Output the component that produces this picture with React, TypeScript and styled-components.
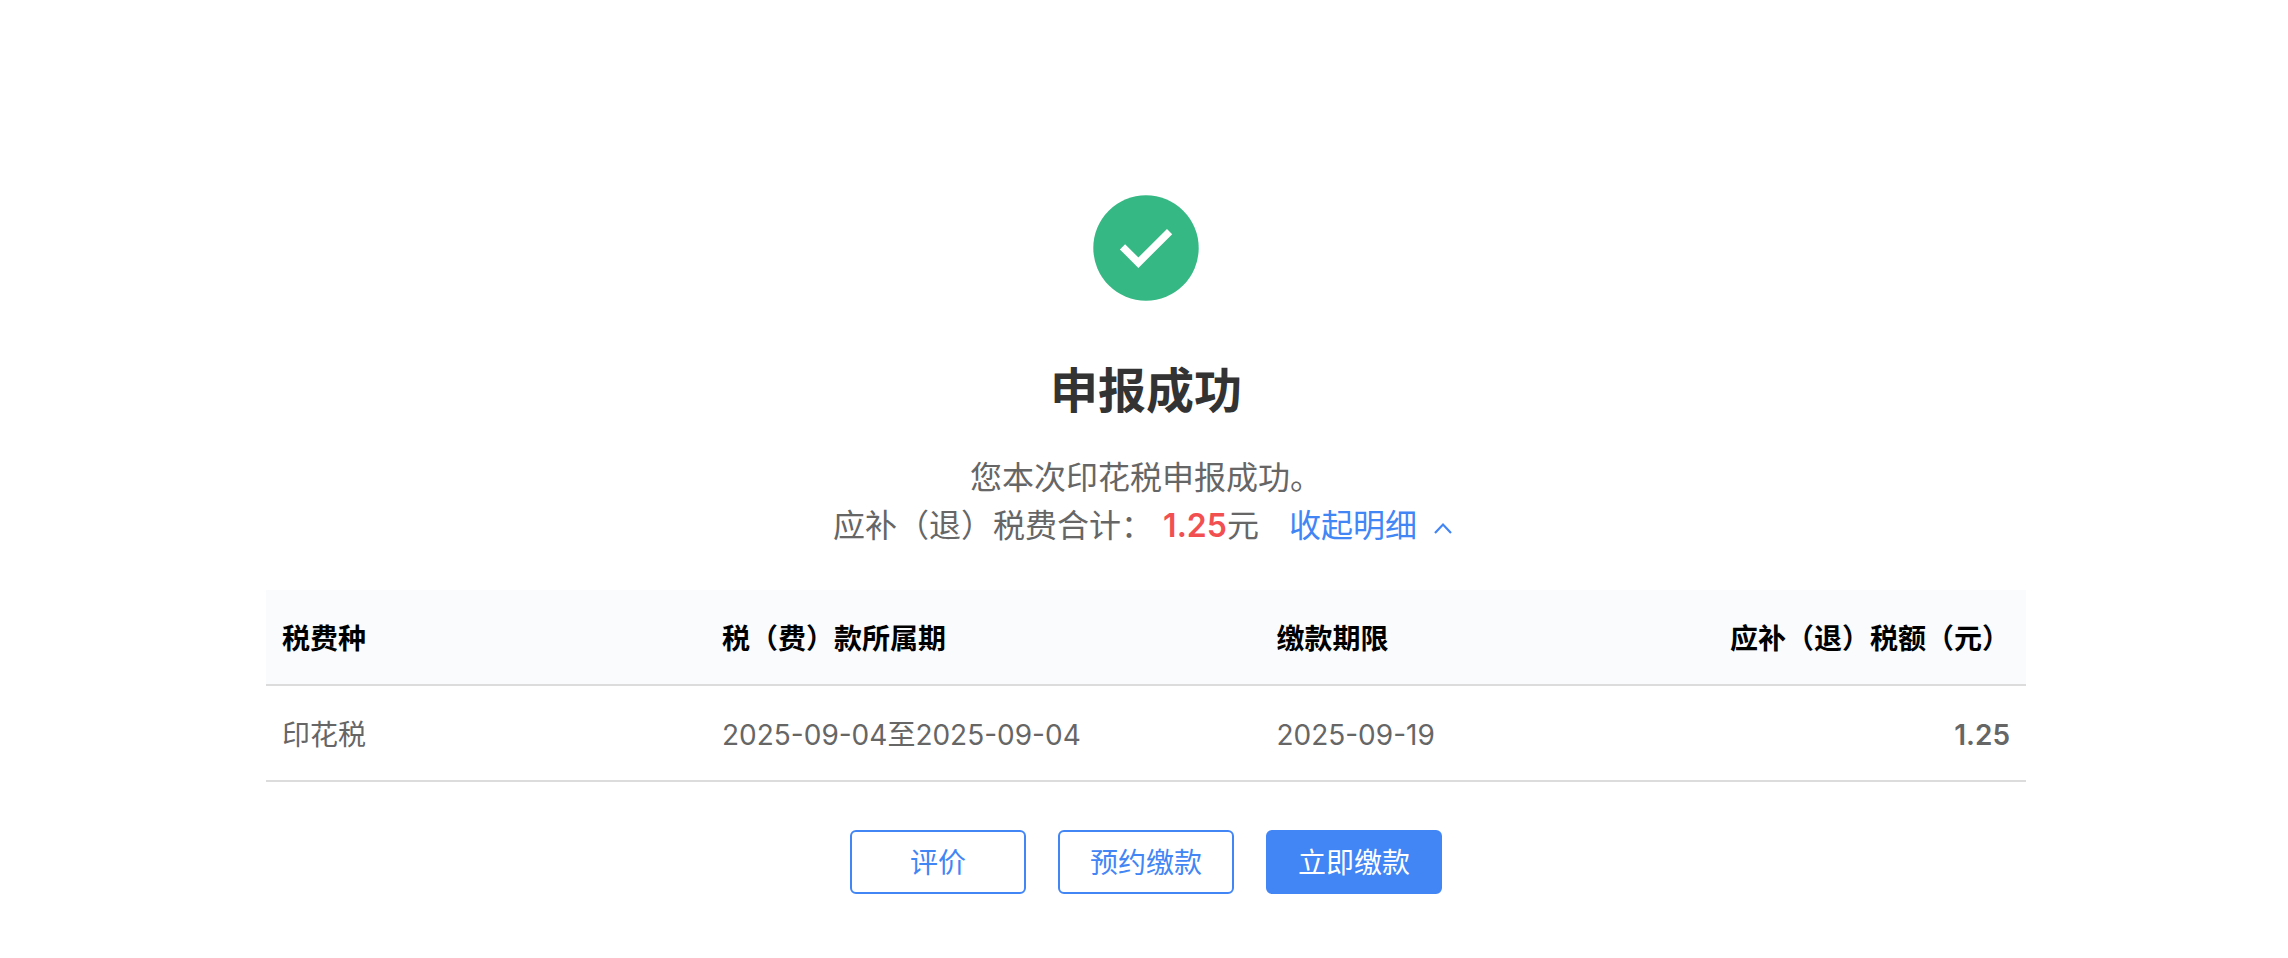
import React, { useState } from "react";
import styled, { createGlobalStyle } from "styled-components";

const GlobalStyle = createGlobalStyle`
  *, *::before, *::after {
    box-sizing: border-box;
  }
  body {
    margin: 0;
    background: #ffffff;
    color: #666666;
    font-family: Inter, "Noto Sans CJK SC", sans-serif;
    font-size: 28px;
    line-height: 40px;
  }
`;

const Page = styled.main`
  display: flex;
  flex-direction: column;
  align-items: center;
  padding: 195px 262px 64px 266px;
`;

const SuccessIcon = styled.svg`
  display: block;
  width: 106px;
  height: 106px;
`;

const Title = styled.h1`
  margin: 54px 0 0;
  color: #333333;
  font-size: 48px;
  font-weight: 700;
  line-height: 72px;
`;

const Summary = styled.div`
  display: flex;
  flex-direction: column;
  align-items: center;
  margin-top: 27px;
  font-size: 32px;
  line-height: 48px;
`;

const SummaryLine = styled.p`
  display: flex;
  align-items: center;
  margin: 0;
`;

const Amount = styled.strong`
  margin-left: 10px;
  color: #f25050;
  font-weight: 600;
`;

const ToggleButton = styled.button`
  display: flex;
  align-items: center;
  gap: 10px;
  margin: 0 0 0 30px;
  padding: 0;
  border: 0;
  background: none;
  color: #4285f5;
  font: inherit;
  cursor: pointer;
`;

const Chevron = styled.svg<{ $open: boolean }>`
  width: 32px;
  height: 32px;
  transform: ${({ $open }) => ($open ? "none" : "rotate(180deg)")};
`;

const DetailTable = styled.table`
  width: 100%;
  margin-top: 40px;
  border-collapse: separate;
  border-spacing: 0;
  table-layout: fixed;
`;

const Column = styled.col<{ $share: number }>`
  width: ${({ $share }) => $share}%;
`;

const HeadCell = styled.th<{ $align?: "left" | "right" }>`
  height: 96px;
  padding: 3px 16px 0;
  border-bottom: 2px solid #dcdcdc;
  background: #fafbfd;
  color: #000000;
  font-weight: 700;
  text-align: ${({ $align = "left" }) => $align};
`;

const Cell = styled.td<{ $align?: "left" | "right"; $strong?: boolean }>`
  height: 96px;
  padding: 3px 16px 0;
  border-bottom: 2px solid #dcdcdc;
  font-weight: ${({ $strong }) => ($strong ? 600 : 400)};
  text-align: ${({ $align = "left" }) => $align};
`;

const Actions = styled.div`
  display: flex;
  gap: 32px;
  margin-top: 48px;
`;

const ActionButton = styled.button<{ $primary?: boolean }>`
  width: 176px;
  height: 64px;
  padding: 2px 0 0;
  border: 2px solid #4285f5;
  border-radius: 6px;
  background: ${({ $primary }) => ($primary ? "#4285f5" : "#ffffff")};
  color: ${({ $primary }) => ($primary ? "#ffffff" : "#4285f5")};
  font: inherit;
  cursor: pointer;
`;

const records = [
  { tax: "印花税", period: "2025-09-04至2025-09-04", deadline: "2025-09-19", amount: "1.25" },
];

export default function App() {
  const [open, setOpen] = useState(true);

  return (
    <>
      <GlobalStyle />
      <Page>
        <SuccessIcon viewBox="0 0 106 106" aria-hidden="true">
          <circle cx="53" cy="53" r="52.7" fill="#36b884" />
          <path d="M29.5 51.8 45.4 67.7 76.6 36.6" fill="none" stroke="#ffffff" strokeWidth="7.4" />
        </SuccessIcon>
        <Title>申报成功</Title>
        <Summary>
          <SummaryLine>您本次印花税申报成功。</SummaryLine>
          <SummaryLine>
            <span>应补（退）税费合计：</span>
            <Amount>1.25</Amount>
            <span>元</span>
            <ToggleButton type="button" aria-expanded={open} onClick={() => setOpen(!open)}>
              {open ? "收起明细" : "展开明细"}
              <Chevron $open={open} viewBox="0 0 32 32" aria-hidden="true">
                <path d="M8 23 16 14.5 24 23" fill="none" stroke="currentColor" strokeWidth="2.2" />
              </Chevron>
            </ToggleButton>
          </SummaryLine>
        </Summary>
        {open && (
          <DetailTable>
            <colgroup>
              <Column $share={25} />
              <Column $share={31.5} />
              <Column $share={18.5} />
              <Column $share={25} />
            </colgroup>
            <thead>
              <tr>
                <HeadCell scope="col">税费种</HeadCell>
                <HeadCell scope="col">税（费）款所属期</HeadCell>
                <HeadCell scope="col">缴款期限</HeadCell>
                <HeadCell scope="col" $align="right">应补（退）税额（元）</HeadCell>
              </tr>
            </thead>
            <tbody>
              {records.map((record) => (
                <tr key={record.tax}>
                  <Cell>{record.tax}</Cell>
                  <Cell>{record.period}</Cell>
                  <Cell>{record.deadline}</Cell>
                  <Cell $align="right" $strong>{record.amount}</Cell>
                </tr>
              ))}
            </tbody>
          </DetailTable>
        )}
        <Actions>
          <ActionButton type="button">评价</ActionButton>
          <ActionButton type="button">预约缴款</ActionButton>
          <ActionButton type="button" $primary>立即缴款</ActionButton>
        </Actions>
      </Page>
    </>
  );
}
